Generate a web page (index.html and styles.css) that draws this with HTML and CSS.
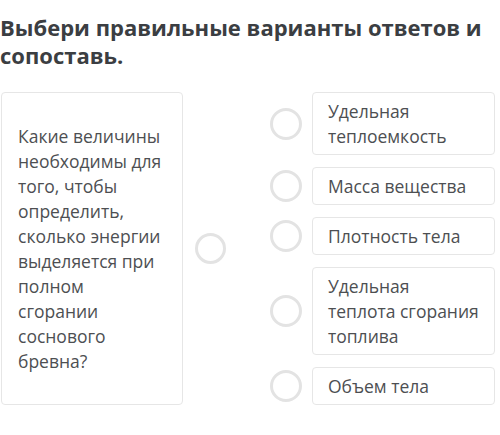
FILE: index.html
```html
<!DOCTYPE html>
<html lang="ru">
<head>
	<meta charset="UTF-8">
	<title>Сопоставление</title>
	<link rel="stylesheet" href="styles.css">
</head>
<body>
	<h1 class="title">Выбери правильные варианты ответов и сопоставь.</h1>
	<section class="match">
		<div class="question">
			<div class="q-card">Какие величины необходимы для того, чтобы определить, сколько энергии выделяется при полном сгорании соснового бревна?</div>
			<span class="dot"></span>
		</div>
		<ul class="answers">
			<li class="answer"><span class="dot"></span><div class="a-card">Удельная теплоемкость</div></li>
			<li class="answer"><span class="dot"></span><div class="a-card">Масса вещества</div></li>
			<li class="answer"><span class="dot"></span><div class="a-card">Плотность тела</div></li>
			<li class="answer"><span class="dot"></span><div class="a-card">Удельная<br>теплота сгорания топлива</div></li>
			<li class="answer"><span class="dot"></span><div class="a-card">Объем тела</div></li>
		</ul>
	</section>
</body>
</html>
```

FILE: styles.css
```css
*{
	box-sizing: border-box;
}
body{
	margin: 0;
	background-color: #fff;
	font-family: "Open Sans", "Noto Sans", sans-serif;
	color: #4d4f52;
}
.title{
	margin: 13px 0 23px 0;
	font-size: 22px;
	line-height: 28px;
	font-weight: 700;
	color: #3b3e42;
}
.match{
	display: flex;
	margin-left: 1px;
}
.question{
	display: flex;
	align-items: center;
}
.q-card{
	width: 182px;
	align-self: stretch;
	display: flex;
	align-items: center;
	padding: 0 18px 0 16px;
	border: 1px solid #e6e6e6;
	border-radius: 4px;
	font-size: 17.5px;
	line-height: 25px;
}
.dot{
	flex: none;
	width: 32px;
	height: 32px;
	border: 3px solid #e3e3e3;
	border-radius: 50%;
}
.question .dot{
	width: 31px;
	height: 31px;
	margin-left: 12px;
}
.answers{
	list-style: none;
	margin: 0 0 0 44px;
	padding: 0;
	display: flex;
	flex-direction: column;
	gap: 12px;
}
.answer{
	display: flex;
	align-items: center;
	gap: 10px;
}
.a-card{
	width: 183px;
	padding: 5.5px 8px 5.5px 15px;
	border: 1px solid #e6e6e6;
	border-radius: 4px;
	font-size: 17.5px;
	line-height: 25px;
}
```
